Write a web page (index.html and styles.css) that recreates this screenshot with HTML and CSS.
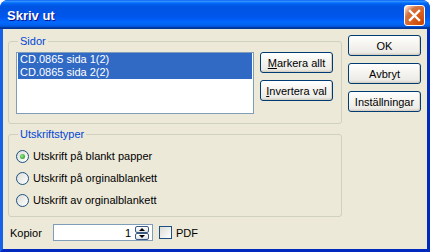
FILE: index.html
```html
<!DOCTYPE html>
<html lang="sv">

<head>
    <title>Skriv ut</title>
    <link rel="stylesheet" href="styles.css">
</head>

<body>
    <div class="window">
        <div class="titlebar">
            <span class="title">Skriv ut</span>
            <button class="close" aria-label="Stäng">
                <svg width="13" height="13" viewBox="0 0 13 13">
                    <path d="M2 2 L11 11 M11 2 L2 11" stroke="#fff" stroke-width="2.4" stroke-linecap="square" />
                </svg>
            </button>
        </div>
        <div class="client">
            <div class="left">
                <fieldset class="group sidor">
                    <legend>Sidor</legend>
                    <div class="sidor-row">
                        <div class="listbox">
                            <div class="item selected">CD.0865 sida 1(2)</div>
                            <div class="item selected">CD.0865 sida 2(2)</div>
                        </div>
                        <div class="btn-col">
                            <button class="btn"><u>M</u>arkera allt</button>
                            <button class="btn"><u>I</u>nvertera val</button>
                        </div>
                    </div>
                </fieldset>

                <fieldset class="group typer">
                    <legend>Utskriftstyper</legend>
                    <label class="radio-row"><span class="radio checked"></span>Utskrift på blankt papper</label>
                    <label class="radio-row"><span class="radio"></span>Utskrift på orginalblankett</label>
                    <label class="radio-row"><span class="radio"></span>Utskrift av orginalblankett</label>
                </fieldset>

                <div class="bottom-row">
                    <span class="kopior">Kopior</span>
                    <div class="spin-input">
                        <span class="value">1</span>
                        <div class="spinner">
                            <span class="spin up"></span>
                            <span class="spin down"></span>
                        </div>
                    </div>
                    <label class="check-row"><span class="checkbox"></span>PDF</label>
                </div>
            </div>

            <div class="right">
                <button class="btn">OK</button>
                <button class="btn">Avbryt</button>
                <button class="btn">Inställningar</button>
            </div>
        </div>
    </div>
</body>

</html>
```

FILE: styles.css
```css
html,
body {
    margin: 0;
    padding: 0;
    background: #ffffff;
}

body {
    font-family: "Liberation Sans", Arial, sans-serif;
    font-size: 11px;
    color: #000000;
}

.window {
    width: 430px;
    height: 252px;
    display: flex;
    flex-direction: column;
    background: #0a3fd6;
    border-radius: 8px 8px 0 0;
    overflow: hidden;
}

.titlebar {
    height: 29px;
    flex: none;
    display: flex;
    align-items: center;
    justify-content: space-between;
    padding: 0 5px 0 7px;
    box-sizing: border-box;
    background: linear-gradient(to bottom, #0058ee 0%, #3a93ff 4%, #288eff 6%, #127dff 8%, #036ffc 10%, #0262ee 14%, #0057e5 20%, #0054e3 24%, #0055eb 56%, #005bf5 66%, #026afe 76%, #0062ef 86%, #0052d6 92%, #0040ab 94%, #003092 100%);
}

.title {
    color: #ffffff;
    font-weight: bold;
    font-size: 13px;
    text-shadow: 1px 1px #0f1089;
    padding-top: 1px;
}

.close {
    width: 21px;
    height: 21px;
    padding: 0;
    margin-top: 1px;
    border: 1px solid #ffffff;
    border-radius: 3px;
    display: flex;
    align-items: center;
    justify-content: center;
    background: radial-gradient(circle at 90% 90%, #cc4600 0%, #dc6527 55%, #cd7546 70%, #ffccb2 90%, #ffffff 100%);
}

.client {
    flex: 1;
    display: flex;
    gap: 6px;
    background: #ece9d8;
    border-left: 3px solid #1661ea;
    border-right: 3px solid #0029bd;
    border-bottom: 3px solid #0029bd;
    padding: 0 6px 0 5px;
}

.left {
    width: 334px;
    display: flex;
    flex-direction: column;
}

.group {
    margin: 0;
    border: 1px solid #d0d0bf;
    border-radius: 3px;
    padding: 0 8px 9px 7px;
    min-width: 0;
}

.group legend {
    color: #0046d5;
    padding: 0 2px;
    margin-left: 2px;
    line-height: 13px;
}

.sidor {
    margin-top: 6px;
}

.sidor-row {
    display: flex;
    gap: 6px;
    margin-top: 4px;
}

.listbox {
    width: 238px;
    height: 62px;
    box-sizing: border-box;
    border: 1px solid #7f9db9;
    background: #ffffff;
    padding: 0 1px;
}

.item {
    height: 13px;
    line-height: 13px;
    padding-left: 2px;
}

.selected {
    background: #316ac5;
    color: #ffffff;
}

.btn-col {
    display: flex;
    flex-direction: column;
    gap: 7px;
}

.btn {
    width: 73px;
    height: 21px;
    padding: 0;
    font-family: "Liberation Sans", Arial, sans-serif;
    font-size: 11px;
    color: #000000;
    border: 1px solid #003c74;
    border-radius: 3px;
    background: linear-gradient(to bottom, #ffffff 0%, #f6f5f1 40%, #ecebe6 86%, #d6d0c5 100%);
    box-shadow: inset -1px -1px #d6d0c5;
}

.typer {
    margin-top: 4px;
    padding-top: 4px;
    padding-bottom: 5px;
}

.radio-row {
    height: 22px;
    display: flex;
    align-items: center;
    gap: 4px;
}

.radio {
    width: 13px;
    height: 13px;
    box-sizing: border-box;
    border: 1px solid #1c5180;
    border-radius: 50%;
    background: linear-gradient(135deg, #dcdcd7 0%, #ffffff 100%);
    display: flex;
    align-items: center;
    justify-content: center;
}

.radio.checked::after {
    content: "";
    width: 5px;
    height: 5px;
    border-radius: 50%;
    background: radial-gradient(circle at 40% 40%, #a2e89a 0%, #4cb944 50%, #2a9a23 100%);
}

.bottom-row {
    display: flex;
    align-items: center;
    margin-top: 7px;
    padding-left: 2px;
}

.kopior {
    width: 43px;
}

.spin-input {
    width: 100px;
    height: 17px;
    box-sizing: border-box;
    border: 1px solid #7f9db9;
    background: #ffffff;
    display: flex;
    align-items: center;
    justify-content: flex-end;
    padding-right: 3px;
    gap: 4px;
}

.spinner {
    display: flex;
    flex-direction: column;
    gap: 0;
}

.spin {
    width: 14px;
    height: 7px;
    box-sizing: border-box;
    border: 1px solid #3b5a82;
    border-radius: 2px;
    background: linear-gradient(to bottom, #ffffff, #dfe3ea);
    display: flex;
    align-items: center;
    justify-content: center;
}

.spin.up::after {
    content: "";
    border-left: 3px solid transparent;
    border-right: 3px solid transparent;
    border-bottom: 3px solid #000000;
}

.spin.down::after {
    content: "";
    border-left: 3px solid transparent;
    border-right: 3px solid transparent;
    border-top: 3px solid #000000;
}

.check-row {
    display: flex;
    align-items: center;
    gap: 4px;
    margin-left: 6px;
}

.checkbox {
    width: 13px;
    height: 13px;
    box-sizing: border-box;
    border: 1px solid #1c5180;
    background: linear-gradient(135deg, #dcdcd7 0%, #ffffff 100%);
}

.right {
    display: flex;
    flex-direction: column;
    gap: 7px;
    padding-top: 6px;
}
```
